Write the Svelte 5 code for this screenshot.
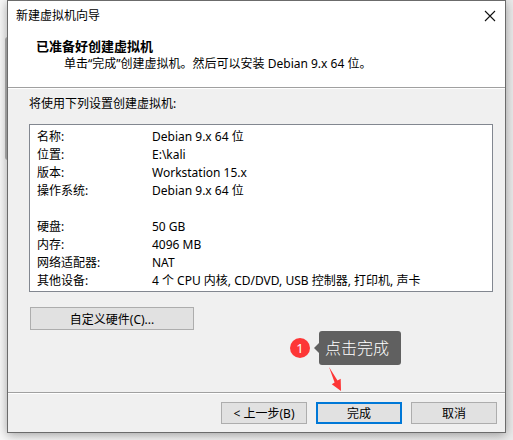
<script>
    const settings = [
        { name: "名称:", value: "Debian 9.x 64 位" },
        { name: "位置:", value: "E:\\kali" },
        { name: "版本:", value: "Workstation 15.x" },
        { name: "操作系统:", value: "Debian 9.x 64 位" },
        { name: "硬盘:", value: "50 GB", group: true },
        { name: "内存:", value: "4096 MB" },
        { name: "网络适配器:", value: "NAT" },
        { name: "其他设备:", value: "4 个 CPU 内核, CD/DVD, USB 控制器, 打印机, 声卡" }
    ];
</script>

<div class="desktop">
    <div class="behind"></div>
    <main class="window">
        <div class="titlebar">
            <span>新建虚拟机向导</span>
            <button class="close" aria-label="关闭">
                <svg width="12" height="12" viewBox="0 0 12 12">
                    <path d="M1 1 L11 11 M11 1 L1 11" stroke="#111" stroke-width="1.1" fill="none" />
                </svg>
            </button>
        </div>

        <header>
            <h1>已准备好创建虚拟机</h1>
            <p>单击“完成”创建虚拟机。然后可以安装 Debian 9.x 64 位。</p>
        </header>

        <section>
            <p id="settings-label">将使用下列设置创建虚拟机:</p>
            <dl aria-labelledby="settings-label">
                {#each settings as row}
                    <div class="row" class:group={row.group}>
                        <dt>{row.name}</dt>
                        <dd>{row.value}</dd>
                    </div>
                {/each}
            </dl>
            <button class="customize">自定义硬件(C)...</button>
        </section>

        <footer>
            <button>&lt; 上一步(B)</button>
            <div class="finish">
                <button class="default">完成</button>
                <div class="callout">
                    <span class="badge">1</span>
                    <span class="bubble">点击完成</span>
                </div>
                <svg class="arrow" width="14" height="26" viewBox="0 0 14 26">
                    <path d="M1 1 L9.5 14.5 L12.7 12.8 L13 25 L3.8 18.2 L6.6 16.5 Z" fill="#fd3636" />
                </svg>
            </div>
            <button>取消</button>
        </footer>
    </main>
</div>

<style>
    :global(body) {
        margin: 0;
        background: #f0f0f0;
    }

    .desktop {
        position: relative;
        display: flex;
        box-sizing: border-box;
        min-height: 100vh;
        padding: 0 7px 7px;
        overflow: hidden;
        background: linear-gradient(90deg, #f8f8f8, #ebebeb);
        color: #000;
        font: 12px/18px "Noto Sans", "Noto Sans CJK SC", sans-serif;
    }

    /* edge of the window underneath */
    .behind {
        position: absolute;
        left: 5px;
        top: 37px;
        width: 3px;
        height: 123px;
        border-radius: 3px 0 0 3px;
        background: #b4b4b4;
    }

    .window {
        position: relative;
        display: flex;
        flex: 1;
        flex-direction: column;
        min-width: 0;
        border: 1px solid #6b6b6b;
        background: #f0f0f0;
        box-shadow: 0 2px 10px rgba(0, 0, 0, 0.35);
    }

    h1, p, dl, dd {
        margin: 0;
    }

    .titlebar {
        display: flex;
        align-items: center;
        justify-content: space-between;
        height: 29px;
        padding: 0 8px;
        background: #fff;
    }

    button {
        box-sizing: border-box;
        width: 86px;
        height: 22px;
        padding: 2px 0 0;
        border: 1px solid #adadad;
        background: #e1e1e1;
        color: #000;
        font: inherit;
        line-height: 18px;
    }

    .close {
        display: flex;
        align-items: center;
        justify-content: center;
        width: 14px;
        padding: 0;
        border: none;
        background: none;
    }

    header {
        padding: 7px 28px 14px;
        border-bottom: 1px solid #a0a0a0;
        background: #fff;
    }

    h1 {
        font-size: 13px;
        line-height: 18px;
    }

    header p {
        padding-left: 28px;
    }

    section {
        flex: 1;
        padding: 6px 12px 38px 21px;
        border-top: 1px solid #fff;
    }

    dl {
        margin: 11px 0 15px;
        padding: 3px 7px 1px;
        border: 1px solid #828790;
        background: #fff;
    }

    .row {
        display: grid;
        grid-template-columns: 115px 1fr;
    }

    .group {
        margin-top: 18px;
    }

    .customize {
        display: block;
        width: 164px;
        height: 23px;
        margin-left: 1px;
    }

    footer {
        display: flex;
        justify-content: flex-end;
        gap: 9px;
        padding: 9px 8px 8px;
        border-top: 1px solid #a0a0a0;
        box-shadow: inset 0 1px #fff;
    }

    .finish {
        position: relative;
    }

    .default {
        padding-top: 1px;
        border: 2px solid #0078d7;
        line-height: 17px;
    }

    .callout {
        position: absolute;
        left: -26px;
        bottom: 59px;
        display: flex;
        align-items: center;
        gap: 9px;
        white-space: nowrap;
    }

    .badge {
        width: 20px;
        height: 20px;
        border-radius: 50%;
        background: #fd3636;
        color: #fff;
        font-size: 13px;
        line-height: 20px;
        text-align: center;
    }

    .bubble {
        position: relative;
        padding: 0 12px 0 6px;
        border-radius: 3px;
        background: #606060;
        color: #fff;
        font-size: 16px;
        font-weight: 300;
        line-height: 34px;
    }

    .bubble::before {
        content: "";
        position: absolute;
        top: 50%;
        right: 100%;
        margin-top: -5px;
        border: 5px solid transparent;
        border-left: none;
        border-right-color: #606060;
    }

    .arrow {
        position: absolute;
        left: 12px;
        bottom: 32px;
    }
</style>
